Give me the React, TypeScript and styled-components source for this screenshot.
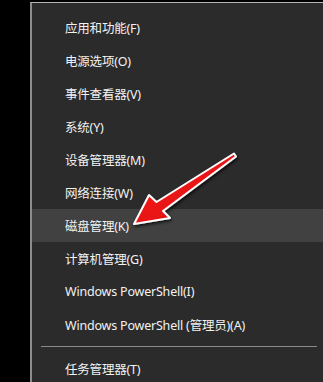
import React from "react";
import styled, { createGlobalStyle } from "styled-components";

const Global = createGlobalStyle`
  html, body { margin: 0; padding: 0; background: #000; }
  body { width: 323px; height: 382px; overflow: hidden; }
`;

const Page = styled.div`
  position: relative;
  width: 323px;
  height: 382px;
  background: #000;
  padding: 2px 0 0 30px;
  box-sizing: border-box;
  font-family: "Noto Sans", "Noto Sans CJK SC", sans-serif;
`;

const Menu = styled.div`
  height: 100%;
  background: #2b2b2b;
  border-left: 2px solid #8c8c8c;
  border-top: 1px solid #b4b4b4;
  padding-top: 8px;
  box-sizing: border-box;
  display: flex;
  flex-direction: column;
`;

const Item = styled.div<{ $active?: boolean }>`
  height: 33px;
  flex-shrink: 0;
  display: flex;
  align-items: center;
  padding-left: 33px;
  color: #f2f2f2;
  font-size: 12.5px;
  letter-spacing: -0.2px;
  background: ${(p) => (p.$active ? "#414141" : "transparent")};
  white-space: nowrap;
`;

const Separator = styled.div`
  height: 11px;
  flex-shrink: 0;
  display: flex;
  align-items: center;
  padding: 0 6px 0 9px;
  &::after {
    content: "";
    flex: 1;
    height: 1px;
    background: #8a8a8a;
  }
`;

const Overlay = styled.svg`
  position: absolute;
  left: 0;
  top: 0;
  pointer-events: none;
`;

const items: { label: string; active?: boolean }[] = [
  { label: "应用和功能(F)" },
  { label: "电源选项(O)" },
  { label: "事件查看器(V)" },
  { label: "系统(Y)" },
  { label: "设备管理器(M)" },
  { label: "网络连接(W)" },
  { label: "磁盘管理(K)", active: true },
  { label: "计算机管理(G)" },
  { label: "Windows PowerShell(I)" },
  { label: "Windows PowerShell (管理员)(A)" },
];

export default function App() {
  return (
    <>
      <Global />
      <Page>
        <Menu>
          {items.map((it) => (
            <Item key={it.label} $active={it.active}>
              {it.label}
            </Item>
          ))}
          <Separator />
          <Item>任务管理器(T)</Item>
        </Menu>
        <Overlay width="323" height="382" viewBox="0 0 323 382">
          <defs>
            <filter id="sh" x="-20%" y="-20%" width="140%" height="140%">
              <feDropShadow dx="1" dy="2" stdDeviation="1.5" floodColor="#000" floodOpacity="0.7" />
            </filter>
            <linearGradient id="rg" x1="0" y1="0" x2="1" y2="1">
              <stop offset="0" stopColor="#ff2a2a" />
              <stop offset="1" stopColor="#d40000" />
            </linearGradient>
          </defs>
          <polygon
            points="234,153.5 156.5,202 149,195 134,224 170,218 163,211 236,156.5"
            fill="url(#rg)"
            stroke="#ffffff"
            strokeWidth="2"
            strokeLinejoin="round"
            filter="url(#sh)"
          />
        </Overlay>
      </Page>
    </>
  );
}
